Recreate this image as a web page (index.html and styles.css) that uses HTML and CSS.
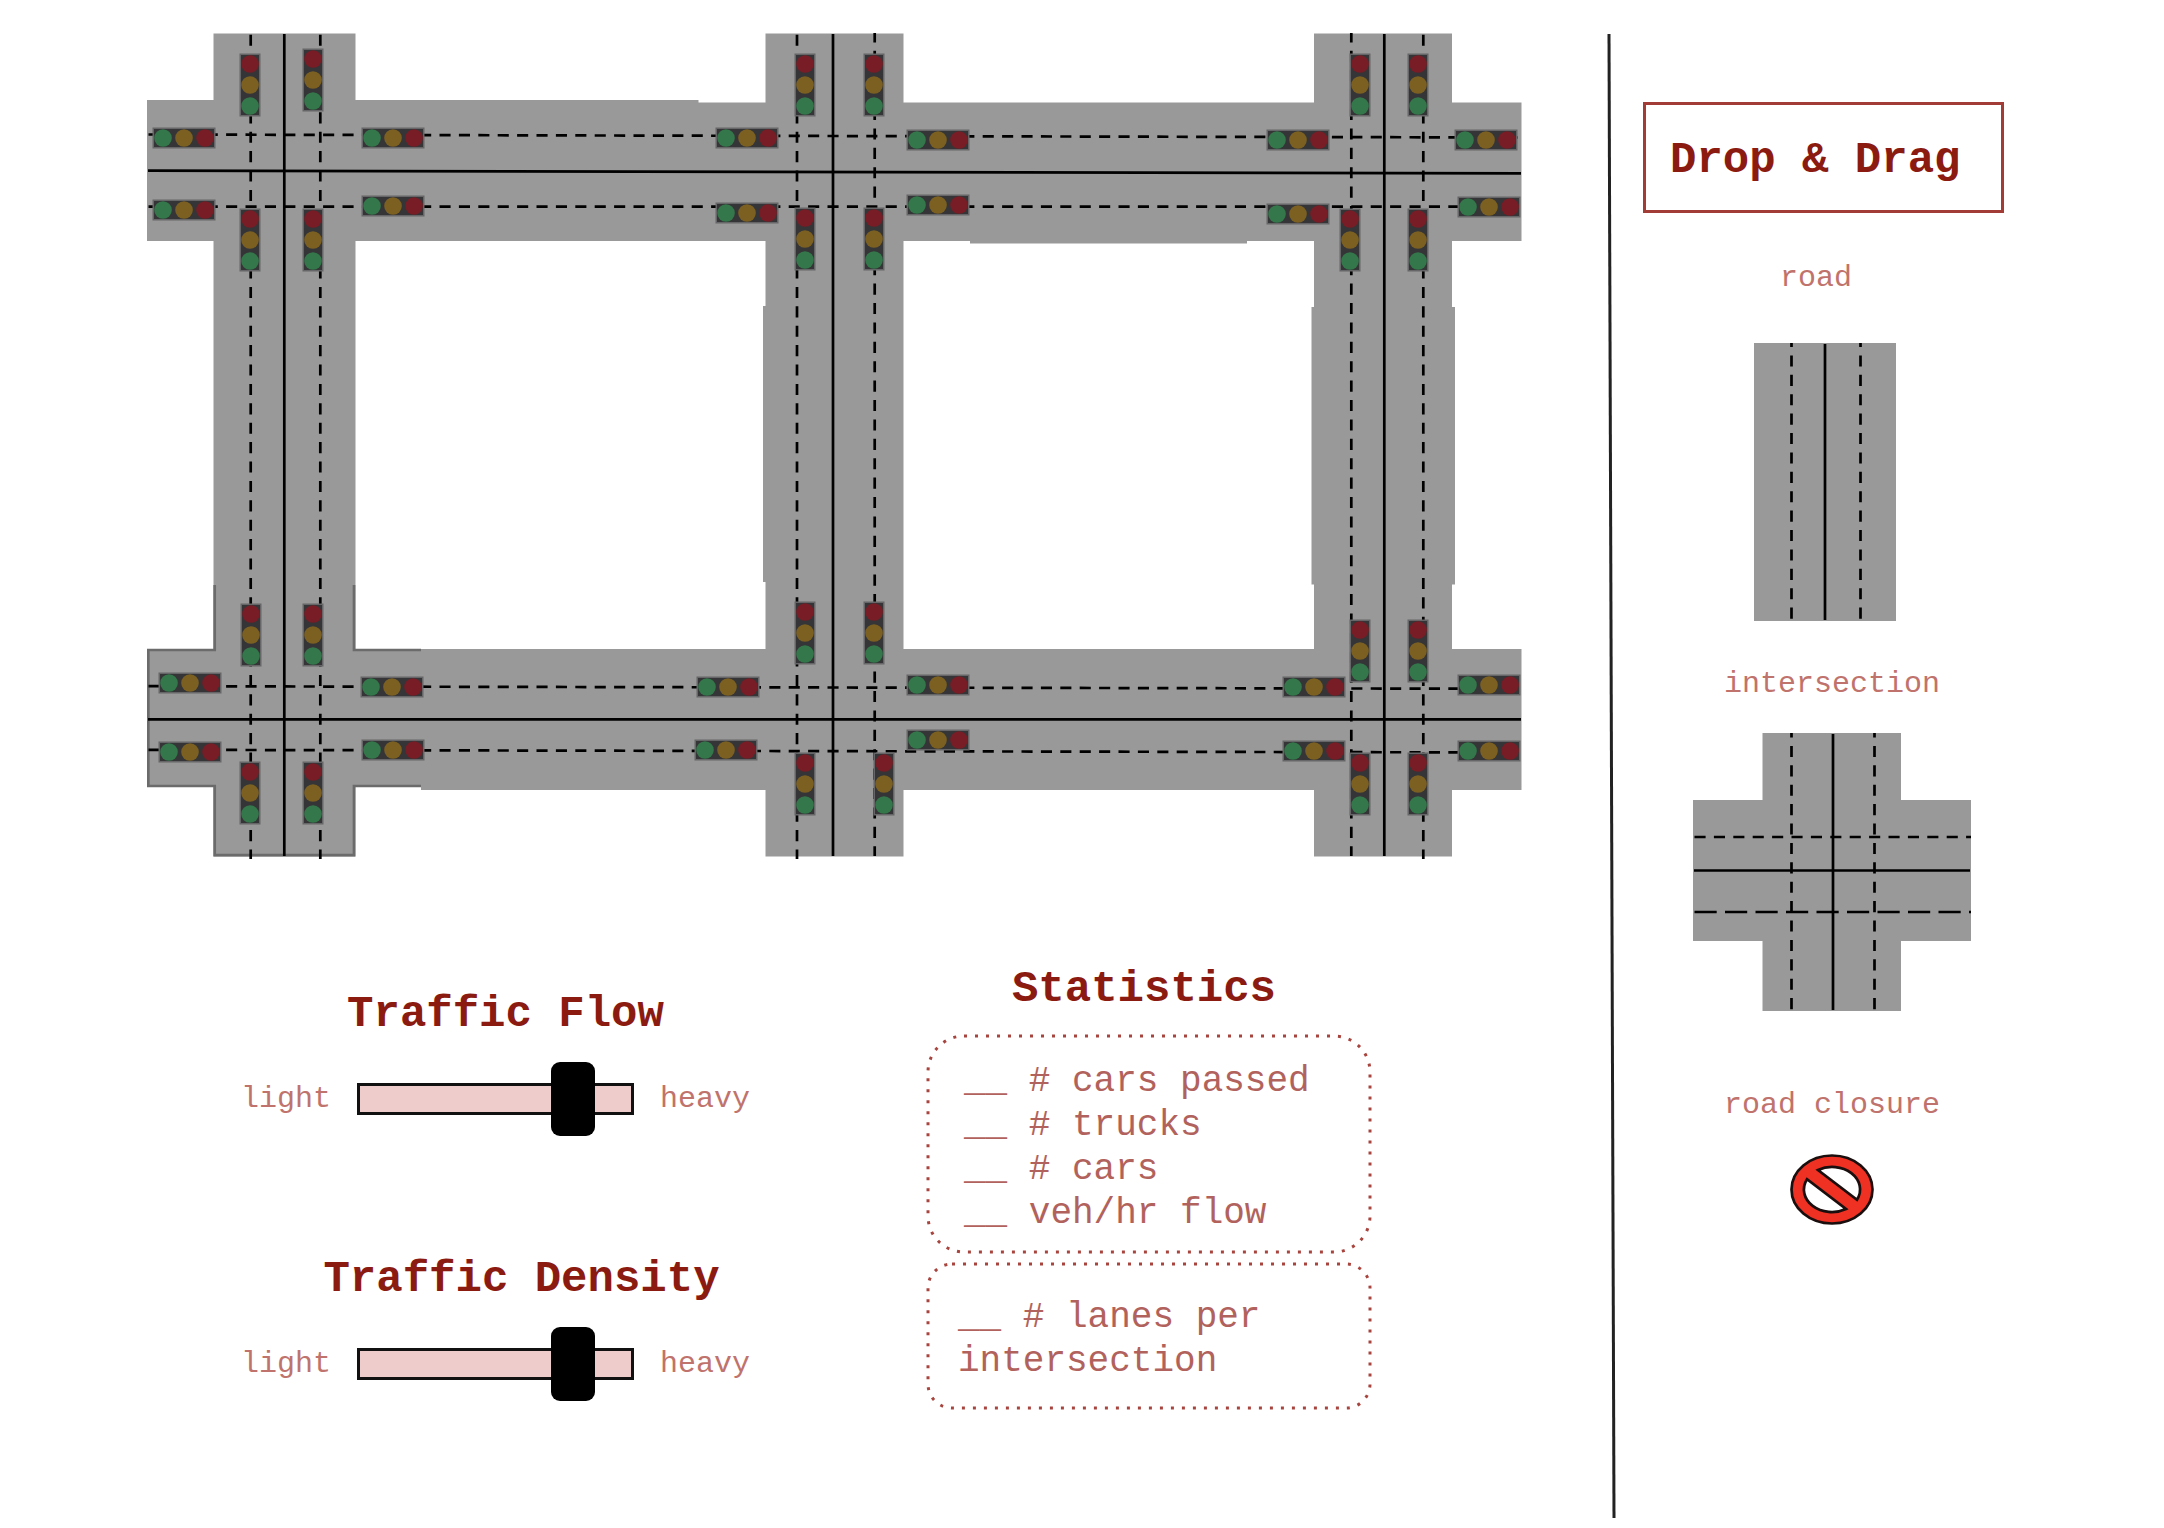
FILE: index.html
```html
<!DOCTYPE html>
<html lang="en">
<head>
<meta charset="utf-8">
<meta name="viewport" content="width=device-width, initial-scale=1">
<title>Traffic Simulator</title>
<link rel="stylesheet" href="styles.css">
</head>
<body>
<div class="page">
  <main class="main">
    <svg class="map" viewBox="147 33 1375 827" role="img" aria-label="Road network with six intersections">
      <defs>
        <g id="light-v">
          <rect class="light-edge" x="-10.5" y="-31.5" width="21" height="63"/>
          <rect class="light-case" x="-9" y="-30" width="18" height="60"/>
          <circle class="light-red" cy="-21" r="8.8"/>
          <circle class="light-amber" r="8.8"/>
          <circle class="light-green" cy="21" r="8.8"/>
        </g>
        <g id="light-h">
          <rect class="light-edge" x="-31.5" y="-10.5" width="63" height="21"/>
          <rect class="light-case" x="-30" y="-9" width="60" height="18"/>
          <circle class="light-green" cx="-21" r="8.8"/>
          <circle class="light-amber" r="8.8"/>
          <circle class="light-red" cx="21" r="8.8"/>
        </g>
      </defs>

      <!-- road surface -->
      <g class="asphalt">
        <path d="M147 100H698.500V102.500H1521.500V241H1247V243.500H970V241H147Z"/>
        <path d="M147 649H1521.500V790H421V787H147Z"/>
        <path d="M213.500 33.500H355.500V856.500H213.500Z"/>
        <path d="M765.500 33.500H903.500V856.500H765.500V582H763V306H765.500Z"/>
        <path d="M1314 33.500H1452V307H1455V584.500H1452V856.500H1314V584.500H1311.500V307H1314Z"/>
      </g>
      <!-- selected intersection outline -->
      <path class="outline" d="M214.700 585V650H148.300V786H214.700V855.200H354V786H421M354 585V650H421"/>

      <!-- centre lines -->
      <g class="line">
        <path d="M284.300 34V856"/>
        <path d="M833 34V856"/>
        <path d="M1384.300 34V856"/>
        <path d="M148 170.700L1521 173.400"/>
        <path d="M148 719.300H1521"/>
      </g>
      <!-- lane lines -->
      <g class="line dashed">
        <path d="M250.700 34.700V859"/>
        <path d="M320.300 34.700V859"/>
        <path d="M797 34.700V859"/>
        <path d="M874.700 31.400V856"/>
        <path d="M1351.300 31.400V856"/>
        <path d="M1423.300 34.700V859"/>
        <path d="M148.500 134.500L1519 137.500"/>
        <path d="M148.500 206.700H1519"/>
        <path d="M148.500 686.200L1519 688.800"/>
        <path d="M148.500 749.800L1519 752.500"/>
      </g>

      <!-- traffic lights, top row of intersections -->
      <use href="#light-v" x="250" y="85"/>
      <use href="#light-v" x="313" y="80"/>
      <use href="#light-v" x="250" y="240"/>
      <use href="#light-v" x="313" y="240"/>
      <use href="#light-h" x="184" y="138"/>
      <use href="#light-h" x="184" y="210"/>
      <use href="#light-h" x="393" y="138"/>
      <use href="#light-h" x="393" y="206"/>

      <use href="#light-v" x="805" y="85"/>
      <use href="#light-v" x="874" y="85"/>
      <use href="#light-v" x="805" y="239"/>
      <use href="#light-v" x="874" y="239"/>
      <use href="#light-h" x="747" y="138"/>
      <use href="#light-h" x="747" y="213"/>
      <use href="#light-h" x="938" y="140"/>
      <use href="#light-h" x="938" y="205"/>

      <use href="#light-v" x="1360" y="85"/>
      <use href="#light-v" x="1418" y="85"/>
      <use href="#light-v" x="1350" y="240"/>
      <use href="#light-v" x="1418" y="240"/>
      <use href="#light-h" x="1298" y="140"/>
      <use href="#light-h" x="1298" y="214"/>
      <use href="#light-h" x="1486" y="140"/>
      <use href="#light-h" x="1489" y="207"/>

      <!-- traffic lights, bottom row of intersections -->
      <use href="#light-v" x="251" y="635"/>
      <use href="#light-v" x="313" y="635"/>
      <use href="#light-v" x="250" y="793"/>
      <use href="#light-v" x="313" y="793"/>
      <use href="#light-h" x="190" y="683"/>
      <use href="#light-h" x="190" y="752"/>
      <use href="#light-h" x="392" y="687"/>
      <use href="#light-h" x="393" y="750"/>

      <use href="#light-v" x="805" y="633"/>
      <use href="#light-v" x="874" y="633"/>
      <use href="#light-v" x="805" y="784"/>
      <use href="#light-v" x="884" y="784"/>
      <use href="#light-h" x="728" y="687"/>
      <use href="#light-h" x="726" y="750"/>
      <use href="#light-h" x="938" y="685"/>
      <use href="#light-h" x="938" y="740"/>

      <use href="#light-v" x="1360" y="651"/>
      <use href="#light-v" x="1418" y="651"/>
      <use href="#light-v" x="1360" y="784"/>
      <use href="#light-v" x="1418" y="784"/>
      <use href="#light-h" x="1314" y="687"/>
      <use href="#light-h" x="1314" y="751"/>
      <use href="#light-h" x="1489" y="685"/>
      <use href="#light-h" x="1489" y="751"/>
    </svg>

    <div class="controls">
      <div class="sliders">
        <section class="control">
          <h2 class="title title-flow"><label for="flow">Traffic Flow</label></h2>
          <div class="slider-row">
            <span class="label">light</span>
            <input class="slider" id="flow" type="range" min="0" max="100" value="84">
            <span class="label">heavy</span>
          </div>
        </section>
        <section class="control">
          <h2 class="title title-density"><label for="density">Traffic Density</label></h2>
          <div class="slider-row">
            <span class="label">light</span>
            <input class="slider" id="density" type="range" min="0" max="100" value="84">
            <span class="label">heavy</span>
          </div>
        </section>
      </div>

      <section class="stats">
        <h2 class="title title-stats">Statistics</h2>
        <div class="stat-box">
          <svg class="frame" aria-hidden="true"><rect class="frame-line" x="2" y="2" rx="36"/></svg>
          <ul class="stat-list">
            <li>__ # cars passed</li>
            <li>__ # trucks</li>
            <li>__ # cars</li>
            <li>__ veh/hr flow</li>
          </ul>
        </div>
        <div class="stat-box stat-box-lanes">
          <svg class="frame" aria-hidden="true"><rect class="frame-line" x="2" y="2" rx="24"/></svg>
          <p class="stat-text">__ # lanes per intersection</p>
        </div>
      </section>
    </div>
  </main>

  <aside class="sidebar">
    <svg class="divider" viewBox="0 0 10 100" preserveAspectRatio="none" aria-hidden="true">
      <path d="M2 0L7 100" vector-effect="non-scaling-stroke"/>
    </svg>
    <div class="palette">
      <h2 class="title palette-title">Drop &amp; Drag</h2>
      <ul class="items">
        <li class="item item-road" draggable="true">
          <span class="label">road&nbsp;</span>
          <svg width="142" height="278" viewBox="0 0 142 278" role="img" aria-label="Road piece">
            <rect class="asphalt" width="142" height="278"/>
            <path class="line" d="M71 1V277"/>
            <path class="line dashed" stroke-dashoffset="7" d="M37.500 0V278M106.500 0V278"/>
          </svg>
        </li>
        <li class="item" draggable="true">
          <span class="label">intersection</span>
          <svg width="278" height="278" viewBox="0 0 278 278" role="img" aria-label="Intersection piece">
            <path class="asphalt" d="M69.500 0H208V67H278V208H208V278H69.500V208H0V67H69.500Z"/>
            <path class="line" d="M140 1V277M1 137.500H277"/>
            <path class="line dashed" stroke-dashoffset="6.500" d="M98.500 0V278M181.500 0V278"/>
            <path class="line dashed" d="M1.500 104H278"/>
            <path class="line dashed-long" d="M1.500 179H278"/>
          </svg>
        </li>
        <li class="item item-closure" draggable="true">
          <span class="label">road closure</span>
          <svg width="84" height="71" viewBox="-42 -35.500 84 71" role="img" aria-label="Road closure sign">
            <path class="sign" fill-rule="evenodd" d="M-40.500 0A40.500 34 0 1 1 40.500 0A40.500 34 0 1 1 -40.500 0ZM-14 -19.500A28 22.500 0 0 1 25 10.200ZM14 19.500A28 22.500 0 0 1 -25 -10.200Z"/>
          </svg>
        </li>
      </ul>
    </div>
  </aside>
</div>
</body>
</html>
```
FILE: styles.css
```css
* {
  box-sizing: border-box;
}

body {
  margin: 0;
  background: #fff;
  color: #b2625c;
  font-family: "Courier New", "Liberation Mono", monospace;
}

.page {
  display: grid;
  grid-template-columns: minmax(0, 1fr) 557px;
  min-height: 100vh;
}

.main {
  padding: 33px 85px 0 147px;
}

.title {
  margin: 0;
  color: #8b1a10;
  font-size: 44px;
  font-weight: 700;
  line-height: 50px;
}

.label {
  color: #c0736c;
  font-size: 30px;
  line-height: 34px;
}

/* Road drawings */
.map {
  display: block;
  width: 100%;
  height: auto;
}

.asphalt {
  fill: #999;
}

.outline {
  fill: none;
  stroke: #6b6b6b;
  stroke-width: 2.7;
}

.line {
  fill: none;
  stroke: #000;
  stroke-width: 2.7;
}

.dashed {
  stroke-dasharray: 11.1 8.3;
}

.dashed-long {
  stroke-dasharray: 22.2 8.3;
}

.light-edge {
  fill: #666668;
}

.light-case {
  fill: #353537;
}

.light-red {
  fill: #781d26;
}

.light-amber {
  fill: #7b6022;
}

.light-green {
  fill: #33774a;
}

/* Controls below the map */
.controls {
  display: grid;
  grid-template-columns: 685fr 596fr;
  margin-top: 104px;
  padding-left: 94px;
}

.sliders {
  display: flex;
  flex-direction: column;
  align-items: flex-start;
  gap: 118px;
  padding-top: 25px;
}

.control {
  display: flex;
  flex-direction: column;
  gap: 23px;
}

.title-flow,
.title-density {
  text-align: center;
}

.title-flow {
  padding-left: 20px;
}

.title-density {
  padding-left: 52px;
}

.slider-row {
  display: flex;
  align-items: center;
  gap: 26px;
}

.slider {
  appearance: none;
  width: 277px;
  height: 74px;
  margin: 0;
  background: transparent;
}

.slider::-webkit-slider-runnable-track {
  height: 32px;
  border: 3px solid #111;
  background: #edcccb;
}

.slider::-webkit-slider-thumb {
  appearance: none;
  width: 44px;
  height: 74px;
  margin-top: -24px;
  border-radius: 9px;
  background: #000;
}

/* Statistics */
.stats {
  display: flex;
  flex-direction: column;
  width: 446px;
}

.title-stats {
  padding-right: 10px;
  margin-bottom: 20px;
  text-align: center;
}

.stat-box {
  position: relative;
  padding: 26px 32px 18px 38px;
  font-size: 36px;
  line-height: 44px;
}

.stat-box-lanes {
  margin-top: 8px;
  padding: 34px 32px 26px;
}

.frame {
  position: absolute;
  inset: 0;
  width: 100%;
  height: 100%;
}

.frame-line {
  width: calc(100% - 4px);
  height: calc(100% - 4px);
  fill: none;
  stroke: #a8443e;
  stroke-width: 3;
  stroke-dasharray: 3 8;
}

.stat-list {
  margin: 0;
  padding: 0;
  list-style: none;
}

.stat-text {
  margin: 0;
}

/* Sidebar */
.sidebar {
  display: flex;
  padding: 34px 0 10px;
}

.divider {
  flex: none;
  align-self: stretch;
  width: 10px;
  height: auto;
}

.divider path {
  stroke: #222;
  stroke-width: 3px;
}

.palette {
  display: flex;
  flex-direction: column;
  align-items: flex-start;
  padding: 68px 0 0 26px;
}

.palette-title {
  padding: 30px 41px 25px 24px;
  border: 3px solid #a23c37;
}

.items {
  display: flex;
  flex-direction: column;
  width: 378px;
  margin: 48px 0 0;
  padding: 0;
  list-style: none;
}

.item {
  display: flex;
  flex-direction: column;
  align-items: center;
  gap: 32px;
}

.item-road {
  gap: 48px;
  margin-bottom: 46px;
  padding-right: 14px;
}

.item-closure {
  margin-top: 77px;
}

.sign {
  fill: #ee3123;
  stroke: #1a0f0e;
  stroke-width: 2.7;
}
```
